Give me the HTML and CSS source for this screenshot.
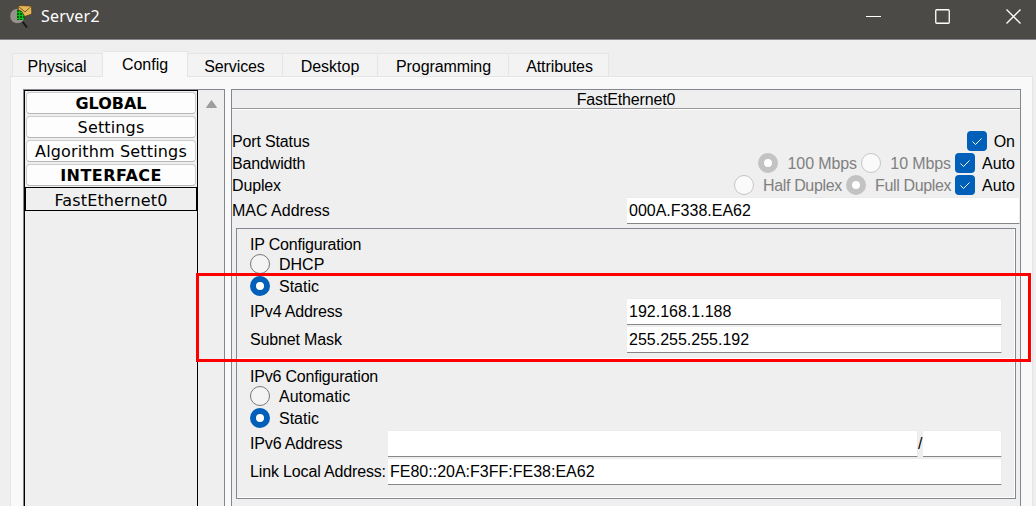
FILE: index.html
```
<!DOCTYPE html>
<html lang="en">
<head>
<meta charset="utf-8">
<title>Server2</title>
<link rel="stylesheet" href="styles.css">
</head>
<body>
<div class="window">
  <header class="titlebar">
    <svg class="app-icon" width="24" height="26" viewBox="0 0 24 26">
      <path d="M12 17l5 6.500" stroke="#151515" stroke-width="1.800"/>
      <circle cx="7.500" cy="12" r="7.300" fill="#96918c"/>
      <path d="M7 6l5-2 3 4v7l-3 1H7z" fill="#075f0c"/>
      <path d="M7 8.500h8M7 11.500h8M7 14.500h7M9.500 5v11M12.500 6v10" stroke="#05c51b" stroke-width="1"/>
      <path d="M8 1.500l13.500.5.3 8-7 2.500-3-5-3.500-2z" fill="#e5b75a" stroke="#4d3511" stroke-width=".7"/>
      <path d="M8 2l7 6 6.500-6" fill="none" stroke="#674a1e" stroke-width=".9"/>
    </svg>
    <span class="title">Server2</span>
    <div class="controls">
      <svg width="16" height="16" viewBox="0 0 16 16"><path d="M0 8.500h15" stroke="#fff"/></svg>
      <svg width="16" height="16" viewBox="0 0 16 16"><rect x=".75" y="1.750" width="13.500" height="13.500" rx="1" fill="none" stroke="#fff" stroke-width="1.3"/></svg>
      <svg width="16" height="16" viewBox="0 0 16 16"><path d="M.5 1.500l14 14M14.500 1.500l-14 14" stroke="#fff" stroke-width="1.3"/></svg>
    </div>
  </header>
  <nav class="tabs">
    <div class="tab physical">Physical</div>
    <div class="tab active">Config</div>
    <div class="tab services">Services</div>
    <div class="tab desktop">Desktop</div>
    <div class="tab programming">Programming</div>
    <div class="tab attributes">Attributes</div>
  </nav>
  <main class="pane">
    <aside class="sidebar">
      <div class="list">
        <div class="item bold">GLOBAL</div>
        <div class="item">Settings</div>
        <div class="item">Algorithm Settings</div>
        <div class="item bold spaced">INTERFACE</div>
        <div class="item selected">FastEthernet0</div>
      </div>
      <div class="scroll"><svg width="13" height="10" viewBox="0 0 13 10"><path d="M6.500 1.500L11.500 8.500h-10z" fill="#9d9d9d" stroke="#9d9d9d" stroke-linejoin="round"/></svg></div>
    </aside>
    <section class="panel">
      <div class="heading">FastEthernet0</div>
      <div class="row first"><span class="label">Port Status</span>
        <div class="options"><i class="check"><svg width="20" height="20" viewBox="0 0 20 20"><path d="M5.500 10.500l3 3 6-6" fill="none" stroke="#fff"/></svg></i><span class="on">On</span></div>
      </div>
      <div class="row"><span class="label">Bandwidth</span>
        <div class="options"><i class="radio off-on"></i><span class="dim mb100">100 Mbps</span><i class="radio off"></i><span class="dim mb10">10 Mbps</span><i class="check"><svg width="20" height="20" viewBox="0 0 20 20"><path d="M5.500 10.500l3 3 6-6" fill="none" stroke="#fff"/></svg></i><span class="auto">Auto</span></div>
      </div>
      <div class="row"><span class="label">Duplex</span>
        <div class="options"><i class="radio off"></i><span class="dim half">Half Duplex</span><i class="radio off-on"></i><span class="dim full">Full Duplex</span><i class="check"><svg width="20" height="20" viewBox="0 0 20 20"><path d="M5.500 10.500l3 3 6-6" fill="none" stroke="#fff"/></svg></i><span class="auto">Auto</span></div>
      </div>
      <div class="mac"><span>MAC Address</span><div class="field">000A.F338.EA62</div></div>
      <div class="group">
        <div class="ip4">
          <div class="caption">IP Configuration</div>
          <div class="choice"><i class="radio"></i><span>DHCP</span></div>
          <div class="choice"><i class="radio selected-radio"></i><span>Static</span></div>
          <div class="entry wide-label"><span>IPv4 Address</span><div class="field">192.168.1.188</div></div>
          <div class="entry wide-label"><span>Subnet Mask</span><div class="field">255.255.255.192</div></div>
        </div>
        <div class="ip6">
          <div class="caption">IPv6 Configuration</div>
          <div class="choice"><i class="radio"></i><span>Automatic</span></div>
          <div class="choice"><i class="radio selected-radio"></i><span>Static</span></div>
          <div class="entry"><span>IPv6 Address</span><div class="field"></div><b class="slash">/</b><div class="field prefix"></div></div>
          <div class="entry"><span>Link Local Address:</span><div class="field">FE80::20A:F3FF:FE38:EA62</div></div>
        </div>
      </div>
    </section>
  </main>
  <div class="highlight"></div>
</div>
</body>
</html>
```
FILE: styles.css
```
* { box-sizing: border-box; }
body { margin: 0; background: #efefef; color: #000; font: 16px/20px "Liberation Sans", Arial, sans-serif; }
.window { position: relative; width: 1036px; height: 506px; overflow: hidden; display: flex; flex-direction: column; }
svg { display: block; flex: none; }
.titlebar { height: 40px; flex: none; background: #4b4a47; border-bottom: 1px solid #85858c; display: flex; align-items: flex-start; padding: 0 15px 0 10px; }
.app-icon { margin-top: 4px; }
.title { font: 16px/24px "Noto Sans", "Open Sans", sans-serif; letter-spacing: .2px; color: #fff; margin: 4px 0 0 7px; }
.controls { display: flex; gap: 54px; margin: 8px -1px 0 auto; }
.controls svg:first-child { margin-right: -1px; }
.controls svg:last-child { margin-left: 1px; }
.tabs { height: 37px; flex: none; display: flex; align-items: flex-end; padding: 0 0 0 12px; }
.tab { height: 24px; border: 1px solid #e5e5e5; border-left-width: 0; background: #f3f3f3; line-height: 26px; text-align: center; }
.physical { width: 91px; border-left-width: 1px; padding-right: 1px; letter-spacing: -.1px; }
.active { width: 85px; height: 26px; background: #f9f9f9; border-bottom: 0; line-height: 25px; }
.services { width: 95px; padding-right: 1px; letter-spacing: -.1px; }
.desktop { width: 95px; }
.programming { width: 131px; padding-left: 1px; letter-spacing: -.1px; }
.attributes { width: 100px; padding-left: 2px; letter-spacing: -.1px; }
.pane { height: 500px; flex: none; margin: -1px 3px 0 10px; border: 1px solid #e5e5e5; background: #f9f9f9; padding: 12px 11px 0 12px; display: flex; gap: 6px; position: relative; z-index: -1; }
.sidebar { width: 202px; border: 1px solid #828790; background: #efefef; display: flex; flex: none; }
.list { width: 174px; border: 1px solid #000; padding-top: 1px; font: 16px/22px "DejaVu Sans", sans-serif; letter-spacing: .15px; }
.item { height: 22px; margin: 0 1px 2px; border: 1px solid #ccc; border-bottom-color: #b8b8b8; border-radius: 4px; background: #fdfdfd; text-align: center; white-space: nowrap; }
.bold { font-weight: bold; letter-spacing: 0; }
.spaced { letter-spacing: .45px; }
.selected { height: 24px; margin: -1px 0 0; border: 1px solid #000; border-radius: 0; background: #efefef; line-height: 25px; }
.scroll { padding: 9px 0 0 7px; }
.panel { flex: 1; border: 1px solid #828790; background: #efefef; min-width: 0; }
.heading { height: 20px; border-bottom: 1px solid #fff; box-shadow: inset 0 -1px #999; text-align: center; line-height: 19px; letter-spacing: -.15px; }
.row { height: 22px; display: flex; justify-content: space-between; align-items: center; padding-right: 5px; }
.first { margin-top: 20px; }
.row span { padding-top: 2px; }
.label { letter-spacing: -.15px; }
.options { display: flex; align-items: center; }
.options span { display: block; text-align: right; white-space: nowrap; }
.dim { color: #808080; letter-spacing: -.1px; }
.on { width: 28px; }
.auto { width: 40px; }
.mb100 { width: 79px; margin-right: 4px; }
.mb10 { width: 70px; margin-right: 4px; }
.half { width: 78px; margin: 0 5px 0 9px; letter-spacing: -.35px; }
.full { width: 75px; margin: 0 5px 0 9px; letter-spacing: -.35px; }
.radio { width: 20px; height: 20px; border: 1px solid #777; border-radius: 50%; background: #f4f4f4; flex: none; }
.off { border-color: #c5c5c5; background: #fafafa; }
.off-on { border: 6px solid #c3c3c3; background: #fff; }
.selected-radio { border: 6px solid #005fb8; background: #fff; }
.check { width: 20px; height: 20px; border-radius: 4px; background: #005fb8; flex: none; }
.mac { display: flex; align-items: center; height: 28px; }
.mac span { width: 395px; padding-top: 1px; }
.field { flex: 1; height: 27px; border: 1px solid #ebebeb; border-left: 0; border-bottom-color: #868686; border-radius: 0 2px 1px 0; background: #fff; line-height: 25px; padding-left: 2px; white-space: nowrap; }
.group { width: 780px; height: 271px; margin: 4px 0 0 4px; border: 1px solid #828790; box-shadow: inset -1px -1px #fff; }
.ip4 { height: 130px; padding: 5px 13px 0; border-bottom: 1px solid #fff; }
.ip6 { padding: 7px 13px 0; }
.caption { height: 19px; line-height: 21px; letter-spacing: -.2px; }
.choice { height: 22px; display: flex; align-items: center; gap: 9px; line-height: 20px; }
.choice span { padding-top: 2px; }
.entry { height: 28px; display: flex; align-items: center; }
.entry span { width: 138px; padding-top: 1px; white-space: nowrap; letter-spacing: -.15px; }
.entry.wide-label span { width: 377px; }
.slash { width: 5px; padding-top: 1px; font-weight: normal; }
.prefix { flex: 0 0 79px; }
.highlight { position: absolute; left: 196px; top: 273px; width: 835px; height: 89px; border: 3px solid #f00; }
```
